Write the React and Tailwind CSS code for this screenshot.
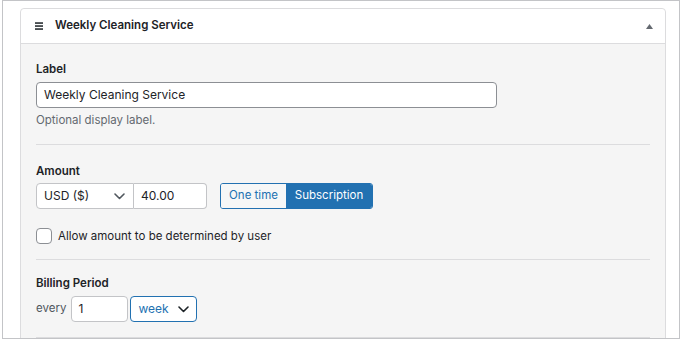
import React from "react";

function Chevron({ className }) {
  return (
    <svg className={className} width="11" height="7" viewBox="0 0 11 7" fill="none" stroke="currentColor" strokeWidth="1.6" strokeLinecap="round" strokeLinejoin="round">
      <path d="M1 1l4.5 4.5L10 1" />
    </svg>
  );
}

export default function App() {
  const font = { fontFamily: "Inter, 'Noto Sans', sans-serif" };
  return (
    <div className="w-[680px] h-[340px] bg-white overflow-hidden" style={font}>
      <div className="ml-[2px] w-[678px] h-[339px] border border-[#c3c4c7] pl-[17px] pt-[7px] overflow-hidden text-[#1d2327]">
        <div className="w-[646px] border border-[#dcdcde] rounded-t-[4px] bg-[#f5f5f5]">
          {/* header */}
          <div className="h-[35px] bg-white border-b border-[#dcdcde] rounded-t-[4px] flex items-center pl-[14px] pr-[12px]">
            <svg width="8" height="8" viewBox="0 0 8 8" className="text-[#1d2327]">
              <rect x="0" y="0.3" width="8" height="1.5" fill="currentColor" />
              <rect x="0" y="3.3" width="8" height="1.5" fill="currentColor" />
              <rect x="0" y="6.3" width="8" height="1.5" fill="currentColor" />
            </svg>
            <span className="ml-[12px] text-[11.5px] font-semibold">Weekly Cleaning Service</span>
            <span className="ml-auto">
              <svg width="7" height="5" viewBox="0 0 7 5" className="text-[#646970]">
                <path d="M3.5 0L7 5H0z" fill="currentColor" />
              </svg>
            </span>
          </div>

          <div className="px-[15px]">
            {/* Label */}
            <div className="pt-[16px] pb-[15px] border-b border-[#dcdcde]">
              <div className="text-[11.5px] leading-[18px] font-semibold mb-[4px]">Label</div>
              <div className="w-[461px] h-[26px] bg-white border border-[#8c8f94] rounded-[4px] flex items-center px-[7px] text-[12px]">
                Weekly Cleaning Service
              </div>
              <div className="mt-[3px] text-[11.5px] leading-[18px] text-[#646970]">Optional display label.</div>
            </div>

            {/* Amount */}
            <div className="pt-[17px] pb-[14px] border-b border-[#dcdcde]">
              <div className="text-[11.5px] leading-[18px] font-semibold mb-[3px]">Amount</div>
              <div className="flex items-center">
                <div className="w-[98px] h-[26px] bg-white border border-[#c3c4c7] rounded-l-[4px] flex items-center pl-[7px] pr-[8px] text-[12px]">
                  <span>USD ($)</span>
                  <Chevron className="ml-auto text-[#50575e]" />
                </div>
                <div className="w-[73px] h-[26px] bg-white border border-l-0 border-[#c3c4c7] rounded-r-[4px] flex items-center px-[7px] text-[12px]">
                  40.00
                </div>
                <div className="ml-[13px] flex h-[26px] rounded-[3px] overflow-hidden border border-[#2271b1] text-[11.5px]">
                  <div className="w-[65px] bg-[#f6f7f7] text-[#2271b1] flex items-center justify-center">One time</div>
                  <div className="w-[86px] bg-[#2271b1] text-white flex items-center justify-center">Subscription</div>
                </div>
              </div>
              <div className="mt-[18px] flex items-center">
                <div className="w-[16px] h-[16px] bg-white border border-[#8c8f94] rounded-[4px]" />
                <span className="ml-[6px] text-[11.5px] leading-[18px]">Allow amount to be determined by user</span>
              </div>
            </div>

            {/* Billing period */}
            <div className="pt-[14px] pb-[15px] border-b border-[#dcdcde]">
              <div className="text-[11.5px] leading-[18px] font-semibold mb-[4px]">Billing Period</div>
              <div className="flex items-center">
                <span className="text-[11.5px] text-[#50575e]">every</span>
                <div className="ml-[5px] w-[57px] h-[26px] bg-white border border-[#c3c4c7] rounded-[4px] flex items-center px-[6px] text-[12px]">
                  1
                </div>
                <div className="ml-[2px] w-[67px] h-[26px] bg-white border border-[#2271b1] rounded-[4px] flex items-center pl-[7px] pr-[7px] text-[12px] text-[#2271b1]">
                  <span>week</span>
                  <Chevron className="ml-auto text-[#1d2327]" />
                </div>
              </div>
            </div>
          </div>
        </div>
      </div>
    </div>
  );
}
